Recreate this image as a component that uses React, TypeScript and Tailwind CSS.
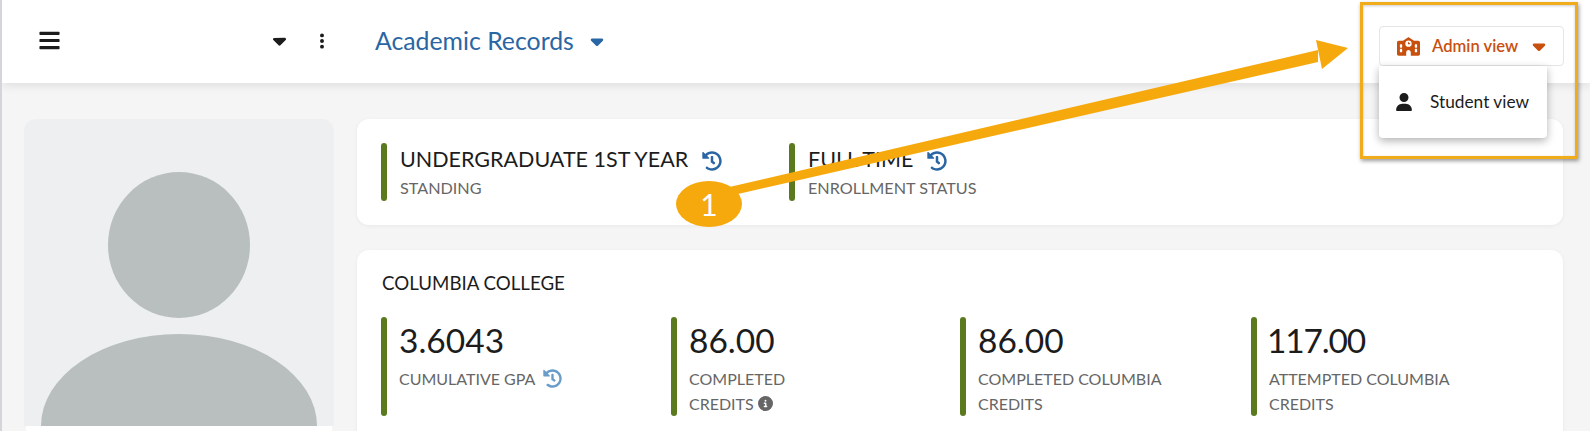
import { FaCaretDown, FaCircleInfo, FaEllipsisVertical, FaSchool, FaUser } from "react-icons/fa6";
import { FaBars, FaHistory } from "react-icons/fa";

interface Stat {
  value: string;
  valueClass?: string;
  label: string[];
  history?: boolean;
  info?: boolean;
}

const stats: Stat[] = [
  { value: "3.6043", label: ["CUMULATIVE GPA"], history: true },
  { value: "86.00", label: ["COMPLETED", "CREDITS"], info: true },
  { value: "86.00", label: ["COMPLETED COLUMBIA", "CREDITS"] },
  { value: "117.00", valueClass: "-ml-[2px] tracking-[-1.2px]", label: ["ATTEMPTED COLUMBIA", "CREDITS"] },
];

function GreenBar({ className }: { className: string }) {
  return <div className={`w-[6px] shrink-0 rounded-full bg-[#5b7a1f] ${className}`} />;
}

function Standing({ title, label, width }: { title: string; label: string; width: string }) {
  return (
    <div className={`flex ${width}`}>
      <GreenBar className="h-[58px]" />
      <div className="ml-[13px]">
        <div className="flex h-[32px] items-center gap-[14px] text-[21.5px] text-[#1c1c1c]">
          <span>{title}</span>
          <FaHistory className="mt-[3px] text-[20px] text-[#2a66a3]" />
        </div>
        <div className="mt-[2px] text-[16.2px] leading-[22px] text-[#666]">{label}</div>
      </div>
    </div>
  );
}

export default function App() {
  return (
    <div className="relative h-[431px] w-[1590px] overflow-hidden border-l-2 border-[#d4d5d8] bg-[#f5f5f6] font-['Lato',sans-serif]">
      {/* Top bar */}
      <header className="flex h-[83px] items-center bg-white pb-[2px] pl-[36px] shadow-[0_2px_10px_rgba(0,0,0,0.1)]">
        <FaBars className="h-[23px] w-[23px] text-[#1c1c1c]" />
        <FaCaretDown className="ml-[208px] text-[21px] text-[#1c1c1c]" />
        <FaEllipsisVertical className="ml-[23px] text-[18px] text-[#1c1c1c]" />
        <span className="ml-[44px] text-[24.8px] text-[#2a66a3]">Academic Records</span>
        <FaCaretDown className="ml-[13px] text-[20px] text-[#2a66a3]" />
      </header>

      <main className="flex gap-[23px] pl-[22px] pt-[36px]">
        {/* Avatar */}
        <div className="w-[310px] shrink-0">
          <div className="h-[307px] overflow-hidden rounded-t-xl bg-[#eeeff0]">
            <svg viewBox="0 0 310 307" className="h-[307px] w-[310px]">
              <ellipse cx="155" cy="126" rx="71" ry="73" fill="#b9bebe" />
              <ellipse cx="155" cy="307" rx="138" ry="92" fill="#b9bebe" />
            </svg>
          </div>
          <div className="mx-[2px] h-[8px] bg-white" />
        </div>

        {/* Cards */}
        <div className="w-[1206px] shrink-0">
          <section className="flex h-[106px] items-center rounded-xl bg-white pl-[24px] shadow-[0_1px_4px_rgba(0,0,0,0.05)]">
            <Standing title="UNDERGRADUATE 1ST YEAR" label="STANDING" width="w-[408px]" />
            <Standing title="FULL TIME" label="ENROLLMENT STATUS" width="w-[300px]" />
          </section>

          <section className="mt-[25px] h-[200px] rounded-xl bg-white pl-[24px] pt-[22px] shadow-[0_1px_4px_rgba(0,0,0,0.05)]">
            <h2 className="ml-[1px] text-[18.7px] leading-[22px] text-[#1c1c1c]">COLUMBIA COLLEGE</h2>
            <div className="mt-[23px] grid grid-cols-[290px_289px_291px_1fr]">
              {stats.map((s, i) => (
                <div key={i} className="flex">
                  <GreenBar className="h-[99px]" />
                  <div className="ml-[12px]">
                    <div className={`mt-[1px] text-[33.5px] leading-[44px] text-[#1c1c1c] ${s.valueClass ?? ""}`}>
                      {s.value}
                    </div>
                    <div className="mt-[4px] text-[16px] leading-[25px] text-[#666]">
                      {s.label.map((line) => (
                        <div key={line} className="flex items-center gap-[4px]">
                          {line}
                          {s.history && <FaHistory className="ml-[4px] text-[19px] text-[#6a9cc9]" />}
                          {s.info && line === "CREDITS" && <FaCircleInfo className="text-[15px] text-[#666]" />}
                        </div>
                      ))}
                    </div>
                  </div>
                </div>
              ))}
            </div>
          </section>
        </div>
      </main>

      {/* Role switcher */}
      <div className="absolute left-[1377px] top-[26px] flex h-[40px] w-[185px] items-center rounded border border-[#e4e5e7] bg-white pl-[17px] text-[16.6px] font-semibold text-[#c8500f]">
        <FaSchool className="text-[23px]" />
        <span className="ml-[12px]">Admin view</span>
        <FaCaretDown className="ml-[11px] text-[20px]" />
      </div>
      <div className="absolute left-[1377px] top-[66px] flex h-[72px] w-[168px] items-center rounded-b bg-white pl-[16px] text-[17.3px] text-[#1c1c1c] shadow-[0_3px_8px_rgba(0,0,0,0.3)]">
        <FaUser className="text-[18px]" />
        <span className="ml-[17px]">Student view</span>
      </div>

      {/* Callout annotation */}
      <div className="absolute left-[1358px] top-[2px] h-[157px] w-[218px] border-[3px] border-[#f0ac1a] shadow-[1px_2px_4px_rgba(0,0,0,0.4),inset_0_1px_3px_rgba(0,0,0,0.2)]" />
      <svg className="absolute left-[-2px] top-0" width="1590" height="431" viewBox="0 0 1590 431" fill="none">
        <path d="M725 188 L1318 50 L1318 62 L725 197 Z" fill="#f5a90d" />
        <path d="M1348 48 L1316 40 L1322 69 Z" fill="#f5a90d" />
      </svg>
      <div className="absolute left-[674px] top-[181px] flex h-[46px] w-[66px] items-center justify-center rounded-[50%] bg-[#f5a90d] text-[30px] text-white">
        1
      </div>
    </div>
  );
}
